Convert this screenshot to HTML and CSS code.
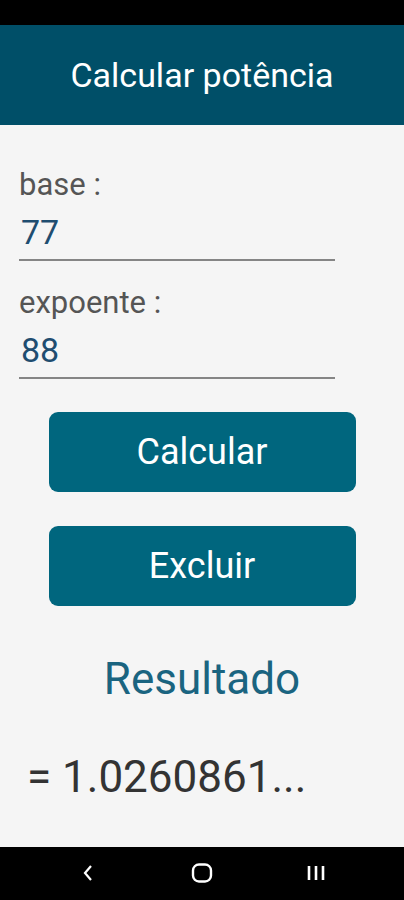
FILE: index.html
```html
<!DOCTYPE html>
<html lang="pt">
<head>
  <meta charset="UTF-8">
  <title>Calcular potência</title>
  <link rel="stylesheet" href="styles.css">
</head>
<body>
<div class="phone">
  <div class="status"></div>
  <div class="header">Calcular potência</div>
  <div class="content">
    <div class="field">
      <div class="label">base :</div>
      <div class="input">77</div>
    </div>
    <div class="field">
      <div class="label">expoente :</div>
      <div class="input">88</div>
    </div>
    <div class="buttons">
      <div class="btn">Calcular</div>
      <div class="btn">Excluir</div>
    </div>
    <div class="result-title">Resultado</div>
    <div class="result">= 1.0260861...</div>
  </div>
  <div class="nav">
    <span class="nav-btn"><svg width="14" height="20" viewBox="0 0 14 20"><path d="M10 3 L4 10 L10 17" fill="none" stroke="#fff" stroke-width="2.2"/></svg></span>
    <span class="nav-btn"><svg width="22" height="22" viewBox="0 0 22 22"><rect x="2" y="2.5" width="18" height="17" rx="6" fill="none" stroke="#fff" stroke-width="2.4"/></svg></span>
    <span class="nav-btn"><svg width="22" height="20" viewBox="0 0 22 20"><path d="M4 3 V17 M11 3 V17 M18 3 V17" fill="none" stroke="#fff" stroke-width="2.6"/></svg></span>
  </div>
</div>
</body>
</html>
```

FILE: styles.css
```css
* {
  padding: 0;
  margin: 0;
  box-sizing: border-box;
}

body {
  font-family: Roboto, "Noto Sans", sans-serif;
  background: #f5f5f5;
}

.phone {
  width: 404px;
  height: 900px;
  display: flex;
  flex-direction: column;
}

.status {
  height: 25px;
  background: #000;
}

.header {
  height: 100px;
  background: #004f68;
  color: #fff;
  font-size: 34px;
  display: flex;
  align-items: center;
  justify-content: center;
  padding-bottom: 1px;
}

.content {
  flex: 1;
  padding-top: 42px;
}

.field {
  padding-left: 19px;
  margin-bottom: 24px;
}

.label {
  font-size: 31px;
  color: #555;
  line-height: 36px;
}

.input {
  width: 316px;
  margin-top: 9px;
  padding-left: 2px;
  font-size: 34px;
  color: #1f4d70;
  line-height: 40px;
  padding-bottom: 7px;
  border-bottom: 2px solid #858585;
}

.buttons {
  display: flex;
  flex-direction: column;
  align-items: center;
  gap: 34px;
  margin-top: 33px;
}

.btn {
  width: 307px;
  height: 80px;
  border-radius: 9px;
  background: #00667e;
  color: #fff;
  font-size: 36px;
  display: flex;
  align-items: center;
  justify-content: center;
}

.result-title {
  margin-top: 47px;
  text-align: center;
  font-size: 44px;
  color: #1a6480;
  line-height: 52px;
}

.result {
  margin-top: 46px;
  padding-left: 27px;
  font-size: 44px;
  color: #333;
  line-height: 52px;
}

.nav {
  height: 53px;
  background: #000;
  display: flex;
  align-items: center;
  justify-content: center;
  gap: 84px;
  padding-bottom: 2px;
}

.nav-btn {
  width: 30px;
  display: flex;
  justify-content: center;
}
```
